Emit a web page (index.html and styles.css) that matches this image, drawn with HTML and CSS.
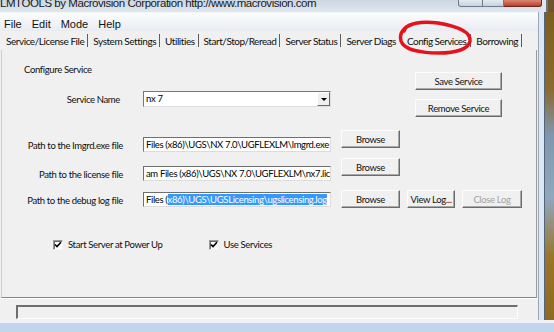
FILE: index.html
```html
<!DOCTYPE html>
<html>
<head>
<meta charset="utf-8">
<title>LMTOOLS</title>
<link rel="stylesheet" href="styles.css">
</head>
<body>
<div class="window">
  <div class="titlebar">
    <span class="title">LMTOOLS by Macrovision Corporation http://www.macrovision.com</span>
    <div class="caption">
      <span class="cb min"></span><span class="cb max"></span><span class="cb close"></span>
    </div>
    <span class="tb-edge"></span>
  </div>
  <div class="client">
    <div class="menubar">
      <span>File</span><span>Edit</span><span>Mode</span><span>Help</span>
    </div>
    <div class="tabs">
      <span class="tab">Service/License File</span><span class="sep"></span>
      <span class="tab">System Settings</span><span class="sep"></span>
      <span class="tab">Utilities</span><span class="sep"></span>
      <span class="tab">Start/Stop/Reread</span><span class="sep"></span>
      <span class="tab">Server Status</span><span class="sep"></span>
      <span class="tab">Server Diags</span>
      <span class="tab active">Config Services</span><span class="sep"></span>
      <span class="tab">Borrowing</span><span class="sep"></span>
    </div>
    <div class="panel">
      <div class="top">
        <div class="left">
          <div class="heading">Configure Service</div>
          <div class="svc-row">
            <span class="svc-label">Service Name</span>
            <div class="combo">
              <span class="combo-text">nx 7</span>
              <span class="combo-btn"><span class="arrow"></span></span>
            </div>
          </div>
        </div>
        <div class="right">
          <button class="btn wide">Save Service</button>
          <button class="btn wide">Remove Service</button>
        </div>
      </div>
      <div class="prow r1">
        <div class="pair">
          <span class="plabel">Path to the lmgrd.exe file</span>
          <div class="field">Files (x86)\UGS\NX 7.0\UGFLEXLM\lmgrd.exe</div>
        </div>
        <button class="btn browse">Browse</button>
      </div>
      <div class="prow r2">
        <div class="pair">
          <span class="plabel">Path to the license file</span>
          <div class="field">am Files (x86)\UGS\NX 7.0\UGFLEXLM\nx7.lic</div>
        </div>
        <button class="btn browse">Browse</button>
      </div>
      <div class="prow r3">
        <div class="pair">
          <span class="plabel">Path to the debug log file</span>
          <div class="field">Files (<span class="hl">x86)\UGS\UGSLicensing\ugslicensing.log</span></div>
        </div>
        <button class="btn browse">Browse</button>
        <button class="btn viewlog">View Log...</button>
        <button class="btn closelog" disabled>Close Log</button>
      </div>
      <div class="checks">
        <label class="check first">
          <span class="cbox"><svg width="8" height="8" viewBox="0 0 8 8"><path d="M1 3.5 L3 5.6 L7 1.2" fill="none" stroke="#000" stroke-width="1.6"/></svg></span>
          <span>Start Server at Power Up</span>
        </label>
        <label class="check second">
          <span class="cbox"><svg width="8" height="8" viewBox="0 0 8 8"><path d="M1 3.5 L3 5.6 L7 1.2" fill="none" stroke="#000" stroke-width="1.6"/></svg></span>
          <span>Use Services</span>
        </label>
      </div>
    </div>
    <div class="statusrow"><div class="status"></div></div>
  </div>
  <div class="rframe"><span class="rf-in"></span><span class="desk"></span></div>
  <div class="bframe"></div>
</div>
<svg class="mark" width="84" height="42" viewBox="0 0 84 42">
  <path d="M10 13 C12 5, 28 3, 44 5 C62 8, 77 13, 76 23 C75 31, 62 35, 45 35 C28 35, 10 32, 7 23 C5 16, 9 9, 19 6" fill="none" stroke="#e5121c" stroke-width="3.5" stroke-linecap="round"/>
</svg>
</body>
</html>
```
FILE: styles.css
```css
* { box-sizing: border-box; }
html, body { margin: 0; padding: 0; }
body {
  width: 554px;
  height: 332px;
  overflow: hidden;
  position: relative;
  background: #c2d5ec;
  font-family: Lato, "Liberation Sans", sans-serif;
  font-size: 9.5px;
  letter-spacing: -0.35px;
  color: #0e0e0e;
}
.window {
  display: grid;
  grid-template-columns: 538px 16px;
  grid-template-rows: 12px 308px 12px;
  width: 554px;
  height: 332px;
}
/* title bar */
.titlebar {
  grid-column: 1 / 3;
  display: flex;
  overflow: hidden;
  background: linear-gradient(#cdd7e2, #dfe6ee);
}
.title {
  flex: 1;
  font-family: "Liberation Sans", sans-serif;
  font-size: 11.5px;
  letter-spacing: -0.45px;
  line-height: 12px;
  margin-top: -3px;
  color: #1a1a1a;
  white-space: nowrap;
  overflow: hidden;
}
.caption { display: flex; height: 7px; }
.cb {
  display: block;
  height: 7px;
  border: 1px solid #6f7b8c;
  border-top: none;
  background: linear-gradient(#e6ebf1, #c6d0dc);
}
.cb.min { width: 25px; border-radius: 0 0 0 3px; }
.cb.max { width: 21px; border-left: none; }
.cb.close {
  width: 38px;
  border-left: none;
  border-color: #6a2a20;
  border-radius: 0 0 3px 0;
  background: linear-gradient(#d88a72, #c13a27);
}
.tb-edge {
  width: 12px;
  background: linear-gradient(to right, #dfe6ee 0 4px, #6b7788 4px 6px, #6b5630 6px);
}
/* client */
.client {
  display: flex;
  flex-direction: column;
  background: #f0f0f0;
}
.menubar {
  height: 19px;
  display: flex;
  gap: 10px;
  padding: 4px 0 0 4px;
  font-family: "Liberation Sans", sans-serif;
  font-size: 11px;
  letter-spacing: 0;
  line-height: 14px;
  color: #111;
  background: linear-gradient(#fbfcfd, #e8ecf2);
  border-top: 1px solid #f4f7fa;
}
.tabs {
  height: 19px;
  display: flex;
  align-items: center;
  padding-left: 1px;
  font-size: 10px;
  letter-spacing: -0.45px;
  line-height: 14px;
}
.tab { padding: 0 3px 0 5px; white-space: nowrap; }
.tab.active { padding: 0 4px 0 8px; letter-spacing: -0.55px; }
.sep { width: 1px; height: 13px; background: #5c5c5c; }
.panel {
  height: 248px;
  margin: 0 1px 0 1px;
  border-left: 1px solid #cfcfcf;
  border-right: 1px solid #9a9a9a;
  border-bottom: 1px solid #858585;
  padding-left: 22px;
  display: flex;
  flex-direction: column;
}
.top { display: flex; }
.left { display: flex; flex-direction: column; }
.heading { margin-top: 13px; line-height: 13px; }
.svc-row { display: flex; align-items: center; margin-top: 15px; }
.svc-label { width: 96px; margin-right: 23px; text-align: right; }
.combo {
  display: flex;
  width: 188px;
  height: 16px;
  background: #fff;
  border-top: 1px solid #777;
  border-left: 1px solid #777;
  border-right: 1px solid #dedede;
  border-bottom: 1px solid #dedede;
}
.combo-text { flex: 1; padding-left: 2px; line-height: 14px; color: #000; }
.combo-btn {
  width: 13px;
  display: flex;
  align-items: center;
  justify-content: center;
  background: #f0f0f0;
  border: 1px solid;
  border-color: #fff #6a6a6a #6a6a6a #fff;
}
.arrow {
  width: 0;
  height: 0;
  border-left: 3px solid transparent;
  border-right: 3px solid transparent;
  border-top: 3px solid #000;
}
.right {
  display: flex;
  flex-direction: column;
  gap: 9px;
  margin-left: 84px;
  padding-top: 22px;
}
.btn {
  font: inherit;
  letter-spacing: inherit;
  color: #111;
  margin: 0;
  padding: 0;
  height: 18px;
  line-height: 15px;
  text-align: center;
  background: #f0f0f0;
  border: 1px solid;
  border-color: #fcfcfc #6b6b6b #6b6b6b #fcfcfc;
  box-shadow: inset -1px -1px 0 #a8a8a8;
  white-space: nowrap;
}
.btn.wide { width: 87px; }
.prow { display: flex; align-items: flex-start; }
.r1 { margin-top: 13px; }
.r2 { margin-top: 6px; }
.r3 { margin-top: 9px; }
.pair { display: flex; align-items: center; }
.r1 .pair { margin-top: 7px; }
.r2 .pair { margin-top: 8px; }
.r3 .pair { margin-top: 2px; }
.plabel {
  width: 99px;
  margin-right: 20px;
  padding-top: 2px;
  text-align: right;
  line-height: 13px;
  white-space: nowrap;
}
.field {
  width: 188px;
  height: 15px;
  padding-left: 2px;
  line-height: 13px;
  white-space: nowrap;
  overflow: hidden;
  background: #fff;
  color: #000;
  border-top: 1px solid #6f6f6f;
  border-left: 1px solid #6f6f6f;
  border-right: 1px solid #dcdcdc;
  border-bottom: 1px solid #dcdcdc;
}
.hl { background: #3399ff; color: #fff; }
.btn.browse { width: 59px; margin-left: 10px; }
.btn.viewlog { width: 48px; margin-left: 7px; }
.btn.closelog { width: 60px; margin-left: 7px; color: #a2a2a2; }
.checks { display: flex; align-items: center; margin-top: 31px; }
.check { display: flex; align-items: center; gap: 5px; }
.check.first { margin-left: 29px; }
.check.second { margin-left: 46px; }
.cbox {
  width: 10px;
  height: 10px;
  display: flex;
  align-items: center;
  justify-content: center;
  background: #fff;
  border-top: 1px solid #9a9a9a;
  border-left: 1px solid #9a9a9a;
  border-right: 1px solid #f4f4f4;
  border-bottom: 1px solid #f4f4f4;
  box-shadow: inset 1px 1px 0 #6a6a6a;
}
.statusrow {
  height: 22px;
  padding: 6px 20px 2px 16px;
  border-top: 1px solid #fff;
}
.status {
  height: 14px;
  border-top: 2px solid #6e6e6e;
  border-left: 2px solid #6e6e6e;
  border-right: 1px solid #fdfdfd;
  border-bottom: 1px solid #fdfdfd;
}
/* frame */
.rframe { display: flex; }
.rf-in {
  width: 7px;
  background: linear-gradient(to right, #9aa6b4 0 1px, #dce8f6 1px 6px, #56647a 6px);
}
.desk {
  flex: 1;
  background: linear-gradient(#7d5e22 0%, #8a6a30 25%, #7e97ae 40%, #8fa8c0 60%, #9a7428 80%, #8e6a24 100%);
}
.bframe {
  grid-column: 1 / 3;
  background: linear-gradient(#eef2f7 0 3px, #c2d5ec 3px);
}
.mark {
  position: absolute;
  left: 394px;
  top: 18px;
}
```
